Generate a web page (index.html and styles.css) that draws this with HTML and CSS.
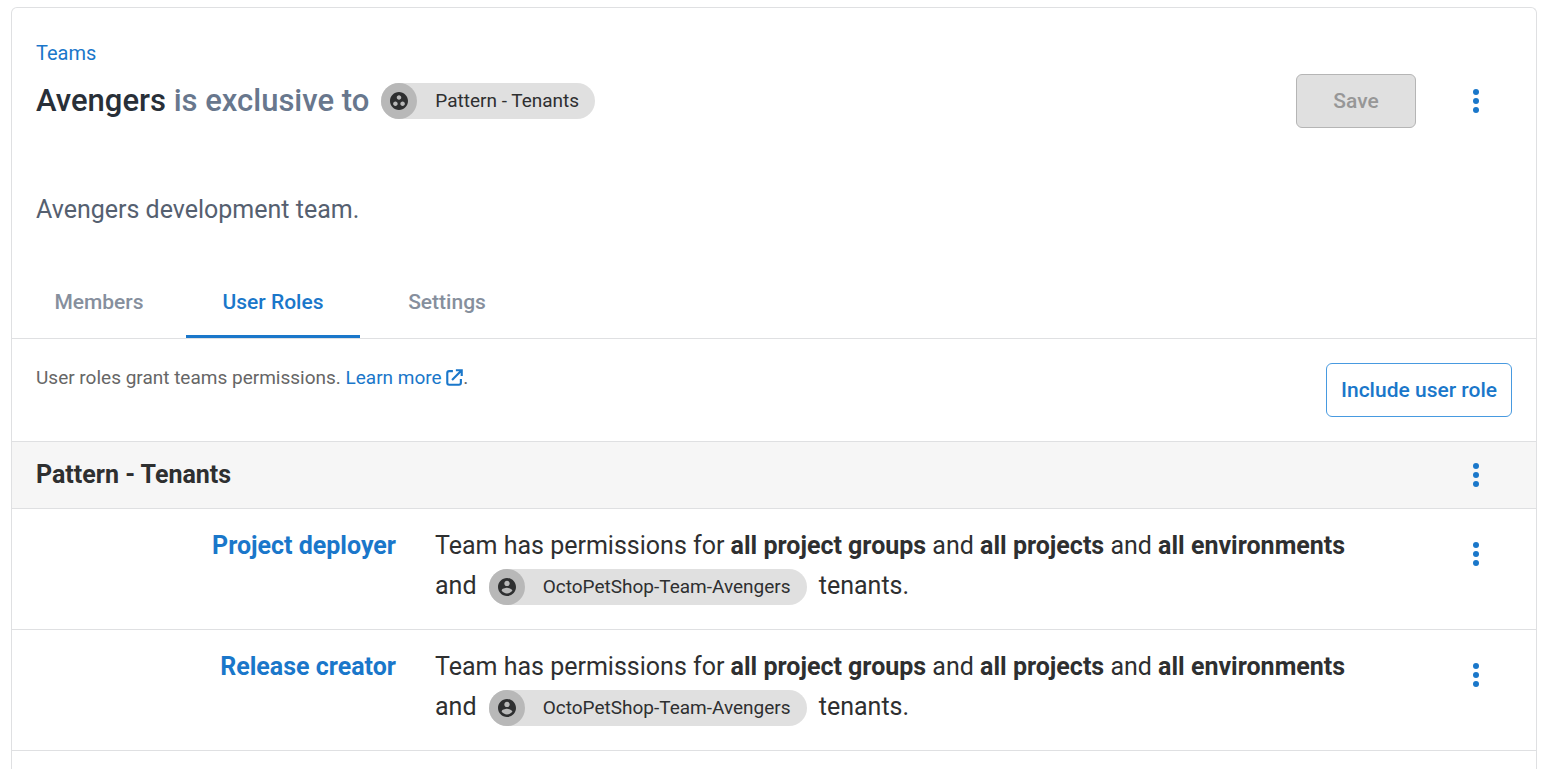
FILE: index.html
```html
<!DOCTYPE html>
<html lang="en">
<head>
<meta charset="utf-8">
<title>Avengers - Teams</title>
<link rel="stylesheet" href="styles.css">
</head>
<body>
<svg class="sprite" aria-hidden="true">
  <symbol id="icon-more" viewBox="0 0 6 24">
    <circle cx="3" cy="3" r="3"/><circle cx="3" cy="12" r="3"/><circle cx="3" cy="21" r="3"/>
  </symbol>
  <symbol id="icon-group" viewBox="2 2 20 20">
    <path d="M12 2C6.480 2 2 6.480 2 12s4.480 10 10 10 10-4.480 10-10S17.520 2 12 2zM8 17.500c-1.380 0-2.500-1.120-2.500-2.500s1.120-2.500 2.500-2.500 2.500 1.120 2.500 2.500-1.120 2.500-2.500 2.500zM9.500 8c0-1.380 1.120-2.500 2.500-2.500s2.500 1.120 2.500 2.500-1.120 2.500-2.500 2.500S9.500 9.380 9.500 8zm6.500 9.500c-1.380 0-2.500-1.120-2.500-2.500s1.120-2.500 2.500-2.500 2.500 1.120 2.500 2.500-1.120 2.500-2.500 2.500z"/>
  </symbol>
  <symbol id="icon-tenant" viewBox="2 2 20 20">
    <path d="M12 2C6.480 2 2 6.480 2 12s4.480 10 10 10 10-4.480 10-10S17.520 2 12 2zm0 3c1.660 0 3 1.340 3 3s-1.340 3-3 3-3-1.340-3-3 1.340-3 3-3zm0 14.200c-2.500 0-4.710-1.280-6-3.220.030-1.990 4-3.080 6-3.080 1.990 0 5.970 1.090 6 3.080-1.290 1.940-3.500 3.220-6 3.220z"/>
  </symbol>
</svg>
<main class="card">
  <header class="header">
    <nav aria-label="Breadcrumb"><a class="breadcrumb" href="#teams">Teams</a></nav>
    <div class="title-row">
      <h1 class="title">Avengers <span class="title-note">is exclusive to</span></h1>
      <span class="chip"><span class="chip-icon"><svg><use href="#icon-group"/></svg></span>Pattern - Tenants</span>
      <button class="button save" type="button" disabled>Save</button>
      <button class="menu" type="button" aria-label="Team actions"><svg><use href="#icon-more"/></svg></button>
    </div>
    <p class="description">Avengers development team.</p>
  </header>
  <div class="tabs" role="tablist">
    <button class="tab" type="button" role="tab" aria-selected="false">Members</button>
    <button class="tab" type="button" role="tab" aria-selected="true">User Roles</button>
    <button class="tab" type="button" role="tab" aria-selected="false">Settings</button>
  </div>
  <section class="toolbar">
    <p class="hint">User roles grant teams permissions. <a href="#learn">Learn more <svg class="external" viewBox="0 0 16 16" aria-hidden="true"><path d="M6.500 2H3Q1.200 2 1.200 3.800V13Q1.200 14.800 3 14.800H12.200Q14 14.800 14 13V9.500M9.300 1.200H14.800V6.700M14.300 1.700L5.700 10.300"/></svg></a>.</p>
    <button class="button include" type="button">Include user role</button>
  </section>
  <section>
    <div class="group">
      <h2 class="group-title">Pattern - Tenants</h2>
      <button class="menu" type="button" aria-label="Space actions"><svg><use href="#icon-more"/></svg></button>
    </div>
    <div class="role">
      <a class="role-name" href="#deployer">Project deployer</a>
      <p class="role-scope">Team has permissions for <strong>all project groups</strong> and <strong>all projects</strong> and <strong>all environments</strong><br>and <span class="chip"><span class="chip-icon"><svg><use href="#icon-tenant"/></svg></span>OctoPetShop-Team-Avengers</span> tenants.</p>
      <button class="menu" type="button" aria-label="Project deployer actions"><svg><use href="#icon-more"/></svg></button>
    </div>
    <div class="role">
      <a class="role-name" href="#creator">Release creator</a>
      <p class="role-scope">Team has permissions for <strong>all project groups</strong> and <strong>all projects</strong> and <strong>all environments</strong><br>and <span class="chip"><span class="chip-icon"><svg><use href="#icon-tenant"/></svg></span>OctoPetShop-Team-Avengers</span> tenants.</p>
      <button class="menu" type="button" aria-label="Release creator actions"><svg><use href="#icon-more"/></svg></button>
    </div>
  </section>
</main>
</body>
</html>
```
FILE: styles.css
```css
* { box-sizing: border-box; }
body {
  margin: 0;
  padding: 7px 10px 0 11px;
  min-height: 100vh;
  display: flex;
  flex-direction: column;
  background: #fff;
  color: #2e2f30;
  font: 25px/40px Roboto, sans-serif;
}
h1, h2, p { margin: 0; }
a { color: #1a77ca; text-decoration: none; }
button { font-family: inherit; cursor: pointer; }
strong { font-weight: 700; }
.sprite { display: none; }

.card {
  flex: 1;
  border: 1px solid #dfe0e2;
  border-bottom: 0;
  border-radius: 6px 6px 0 0;
}
.header { padding: 32px 24px 38px; }
.breadcrumb { display: block; font-size: 20px; line-height: 26px; }
.title-row { display: flex; align-items: center; margin-top: 8px; }
.title { color: #282f38; font-size: 31px; font-weight: 500; line-height: 40px; }
.title-note { color: #68778d; }
.description { margin-top: 64px; color: #556070; line-height: 36px; }

.chip {
  display: inline-flex;
  align-items: center;
  gap: 18px;
  height: 36px;
  margin: 0 12px;
  padding-right: 16px;
  border-radius: 18px;
  background: #e0e0e0;
  color: #2e2f30;
  font-size: 19px;
  line-height: 36px;
  white-space: nowrap;
}
.chip-icon {
  display: grid;
  place-items: center;
  width: 36px;
  height: 36px;
  border-radius: 50%;
  background: #b8b8b8;
}
.chip-icon svg { width: 18px; height: 18px; fill: #2e2f30; }

.button {
  height: 54px;
  border: 1px solid;
  border-radius: 6px;
  font-size: 21px;
  font-weight: 500;
}
.save {
  width: 120px;
  margin-left: auto;
  margin-right: 24px;
  border-color: #b5b5b5;
  background: #e0e0e0;
  color: #979797;
  cursor: default;
}
.include {
  padding: 0 14px;
  border-color: #489ae0;
  background: #fff;
  color: #1a77ca;
}
.menu {
  display: grid;
  place-items: center;
  width: 72px;
  height: 54px;
  padding: 0;
  border: 0;
  background: none;
}
.menu svg { width: 6px; height: 24px; fill: #1a77ca; }

.tabs { display: flex; border-bottom: 1px solid #dfe0e2; }
.tab {
  width: 174px;
  height: 72px;
  padding: 3px 0 0;
  border: 0;
  border-bottom: 3px solid transparent;
  background: none;
  color: #868f9d;
  font-size: 21px;
  font-weight: 500;
}
.tab[aria-selected="true"] { border-color: #1a77ca; color: #1a77ca; }

.toolbar {
  display: flex;
  justify-content: space-between;
  padding: 24px;
}
.hint { color: #666; font-size: 19px; line-height: 30px; }
.external {
  width: 17px;
  height: 17px;
  vertical-align: -2px;
  fill: none;
  stroke: #1a77ca;
  stroke-width: 2;
}

.group {
  display: flex;
  align-items: center;
  justify-content: space-between;
  padding: 6px 24px;
  border: solid #dfe0e2;
  border-width: 1px 0;
  background: #f6f6f6;
}
.group-title { font-size: 25px; font-weight: 700; line-height: 40px; }
.role {
  display: grid;
  grid-template-columns: 360px 1fr 72px;
  column-gap: 39px;
  padding: 17px 24px 23px;
  border-bottom: 1px solid #dfe0e2;
}
.role-name { font-weight: 700; text-align: right; }
.role-scope .chip { margin: 0 6px; vertical-align: middle; }
.role .menu { margin-top: 1px; }
```
